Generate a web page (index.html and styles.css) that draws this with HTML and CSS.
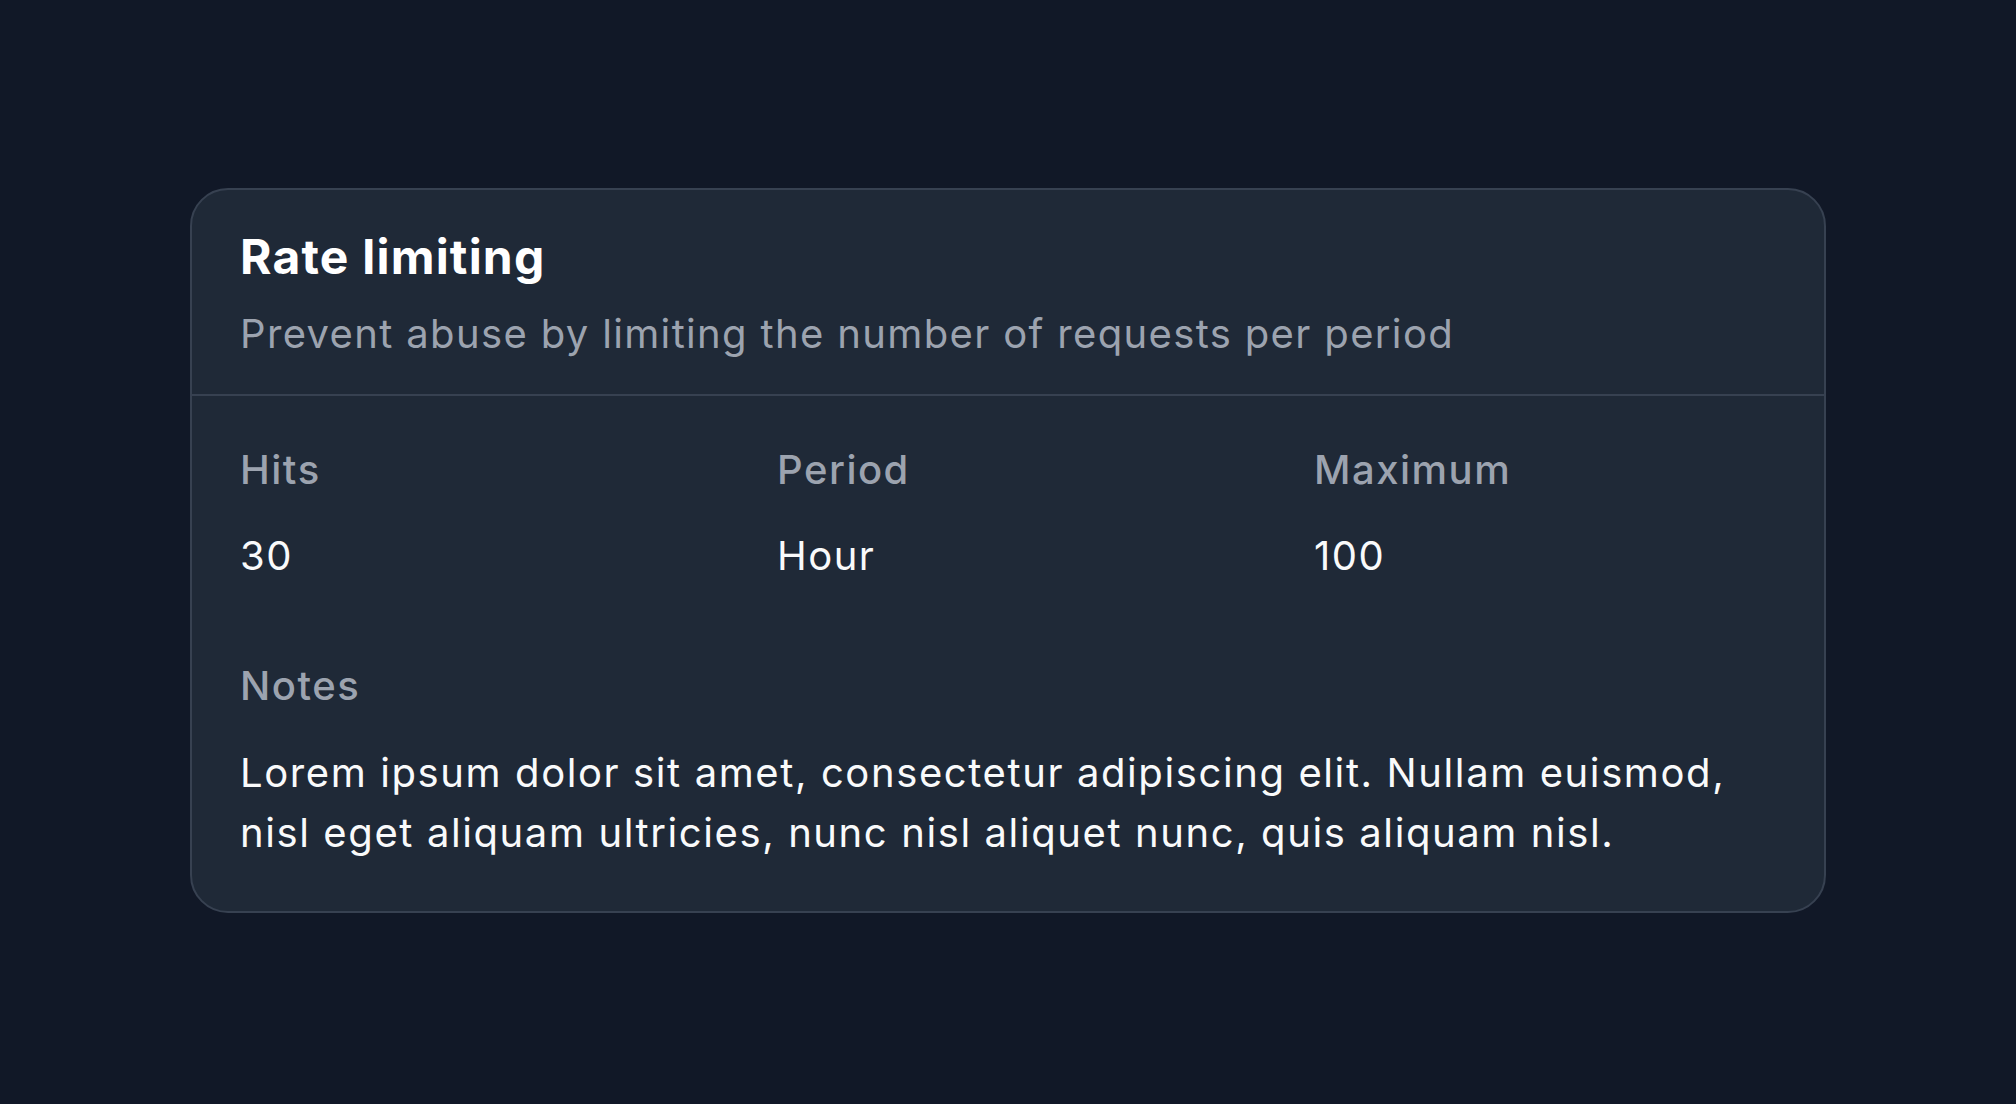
FILE: index.html
```html
<!DOCTYPE html>
<html lang="en">
<head>
<meta charset="utf-8">
<title>Rate limiting</title>
<link rel="stylesheet" href="styles.css">
</head>
<body>
  <section class="card">
    <header class="card-header">
      <h1 class="card-title">Rate limiting</h1>
      <p class="card-subtitle">Prevent abuse by limiting the number of requests per period</p>
    </header>
    <div class="card-body">
      <dl class="stats">
        <div class="stat">
          <dt class="label">Hits</dt>
          <dd class="value">30</dd>
        </div>
        <div class="stat">
          <dt class="label">Period</dt>
          <dd class="value">Hour</dd>
        </div>
        <div class="stat">
          <dt class="label">Maximum</dt>
          <dd class="value">100</dd>
        </div>
      </dl>
      <div class="notes">
        <div class="label">Notes</div>
        <p class="notes-text">Lorem ipsum dolor sit amet, consectetur adipiscing elit. Nullam euismod, nisl eget aliquam ultricies, nunc nisl aliquet nunc, quis aliquam nisl.</p>
      </div>
    </div>
  </section>
</body>
</html>
```

FILE: styles.css
```css
* { box-sizing: border-box; }

html, body {
  margin: 0;
  padding: 0;
}

body {
  min-height: 100vh;
  padding-bottom: 4px;
  background: #111827;
  font-family: "Inter", "Liberation Sans", sans-serif;
  font-variant-ligatures: none;
  color: #f9fafb;
  display: flex;
  align-items: center;
  justify-content: center;
}

.card {
  width: 1636px;
  background: #1f2937;
  border: 2px solid #374151;
  border-radius: 38px;
}

.card-header {
  padding: 38px 48px 30px;
  border-bottom: 2px solid #374151;
}

.card-title {
  margin: 0;
  font-size: 48px;
  line-height: 58px;
  font-weight: 700;
  letter-spacing: 1.2px;
  color: #ffffff;
}

.card-subtitle {
  margin: 18px 0 0;
  font-size: 40px;
  line-height: 60px;
  letter-spacing: 1.35px;
  color: #9ca3af;
}

.card-body {
  padding: 44px 48px 48px;
}

.stats {
  margin: 0;
  display: grid;
  grid-template-columns: repeat(3, 1fr);
  column-gap: 75px;
}

.stat { margin: 0; }

.label {
  margin: 0;
  font-size: 40px;
  line-height: 60px;
  font-weight: 500;
  letter-spacing: 1.5px;
  color: #9ca3af;
}

.value {
  margin: 26px 0 0;
  font-size: 40px;
  line-height: 60px;
  letter-spacing: 1.5px;
  color: #f9fafb;
}

.notes {
  margin-top: 70px;
}

.notes-text {
  margin: 27px 0 0;
  font-size: 40px;
  line-height: 60px;
  letter-spacing: 1.6px;
  color: #f9fafb;
}
```
